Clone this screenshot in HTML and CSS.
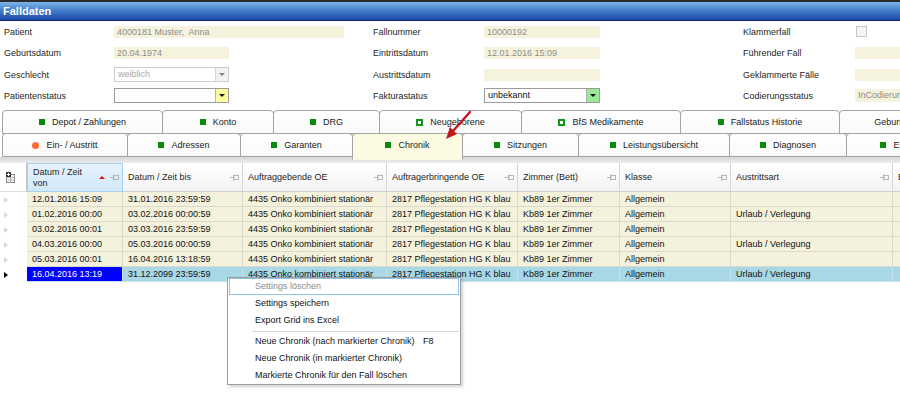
FILE: index.html
```html
<!DOCTYPE html>
<html lang="de">
<head>
<meta charset="UTF-8">
<title>Falldaten</title>
<link rel="stylesheet" href="styles.css">
</head>
<body>

<svg class="defs">
    <symbol id="pin" viewBox="0 0 9 7">
        <path d="M0 3.5h3M3.5 0.5v6" stroke="#b8b8b8" stroke-width="1"/>
        <rect x="4" y="1.5" width="4.5" height="4" fill="none" stroke="#b8b8b8" stroke-width="1"/>
    </symbol>
</svg>

<div class="titlebar">Falldaten</div>

<div class="form">
    <span class="lbl">Patient</span>
    <div><div class="f wide">4000181 Muster,&nbsp; Anna</div></div>
    <span class="lbl">Fallnummer</span>
    <div><div class="f c2">10000192</div></div>
    <span class="lbl">Klammerfall</span>
    <div><div class="check"></div></div>

    <span class="lbl">Geburtsdatum</span>
    <div><div class="f">20.04.1974</div></div>
    <span class="lbl">Eintrittsdatum</span>
    <div><div class="f c2">12.01.2016 15:09</div></div>
    <span class="lbl">Führender Fall</span>
    <div><div class="f c3"></div></div>

    <span class="lbl">Geschlecht</span>
    <div><div class="combo ro"><span class="val">weiblich</span><span class="btn"></span></div></div>
    <span class="lbl">Austrittsdatum</span>
    <div><div class="f c2"></div></div>
    <span class="lbl">Geklammerte Fälle</span>
    <div><div class="f c3"></div></div>

    <span class="lbl">Patientenstatus</span>
    <div><div class="combo"><span class="val"></span><span class="btn yellow"></span></div></div>
    <span class="lbl">Fakturastatus</span>
    <div><div class="combo c2"><span class="val">unbekannt</span><span class="btn green"></span></div></div>
    <span class="lbl">Codierungsstatus</span>
    <div><div class="f c3 tall">InCodierung</div></div>
</div>

<div class="tabs">
    <div class="tabrow">
        <div class="tab t-depot"><i class="sq"></i>Depot / Zahlungen</div>
        <div class="tab t-konto"><i class="sq"></i>Konto</div>
        <div class="tab t-drg"><i class="sq"></i>DRG</div>
        <div class="tab t-neu"><i class="sq empty"></i>Neugeborene</div>
        <div class="tab t-bfs"><i class="sq empty"></i>BfS Medikamente</div>
        <div class="tab t-hist"><i class="sq"></i>Fallstatus Historie</div>
        <div class="tab t-geb">Geburtsinfo</div>
    </div>
    <div class="tabrow">
        <div class="tab t-ein"><i class="dot"></i>Ein- / Austritt</div>
        <div class="tab t-adr"><i class="sq"></i>Adressen</div>
        <div class="tab t-gar"><i class="sq"></i>Garanten</div>
        <div class="tab t-chr active"><i class="sq"></i>Chronik</div>
        <div class="tab t-sitz"><i class="sq"></i>Sitzungen</div>
        <div class="tab t-leist"><i class="sq"></i>Leistungsübersicht</div>
        <div class="tab t-diag"><i class="sq"></i>Diagnosen</div>
        <div class="tab t-einw"><i class="sq"></i>Einweisung</div>
    </div>
</div>
<div class="strip"></div>

<div class="grid">
    <div class="gh">
        <div class="hc sel">
            <svg width="10" height="11" viewBox="0 0 10 11">
                <rect x="0.5" y="2.5" width="8" height="8" fill="#fff" stroke="#8a8a8a"/>
                <path d="M0.5 5.5h8M0.5 8h8M4.5 2.5v8" stroke="#b0b0b0"/>
                <rect x="0" y="0" width="5" height="5" fill="#3a3a3a"/>
                <path d="M2.5 1v3M1 2.5h3" stroke="#fff"/>
            </svg>
        </div>
        <div class="hc on"><span class="t">Datum / Zeit<br>von</span><i class="sort"></i><svg class="pin"><use href="#pin"/></svg></div>
        <div class="hc"><span class="t">Datum / Zeit bis</span><svg class="pin"><use href="#pin"/></svg></div>
        <div class="hc"><span class="t">Auftraggebende OE</span><svg class="pin"><use href="#pin"/></svg></div>
        <div class="hc"><span class="t">Auftragerbringende OE</span><svg class="pin"><use href="#pin"/></svg></div>
        <div class="hc"><span class="t">Zimmer (Bett)</span><svg class="pin"><use href="#pin"/></svg></div>
        <div class="hc"><span class="t">Klasse</span><svg class="pin"><use href="#pin"/></svg></div>
        <div class="hc"><span class="t">Austrittsart</span><svg class="pin"><use href="#pin"/></svg></div>
        <div class="hc"><span class="t">Bemerkung</span><svg class="pin"><use href="#pin"/></svg></div>
    </div>

    <div class="gr">
        <div class="c s"></div><div class="c">12.01.2016 15:09</div><div class="c">31.01.2016 23:59:59</div>
        <div class="c">4435 Onko kombiniert stationär</div><div class="c">2817 Pflegestation HG K blau</div>
        <div class="c">Kb89 1er Zimmer</div><div class="c">Allgemein</div><div class="c"></div><div class="c"></div>
    </div>
    <div class="gr">
        <div class="c s"></div><div class="c">01.02.2016 00:00</div><div class="c">03.02.2016 00:00:59</div>
        <div class="c">4435 Onko kombiniert stationär</div><div class="c">2817 Pflegestation HG K blau</div>
        <div class="c">Kb89 1er Zimmer</div><div class="c">Allgemein</div><div class="c">Urlaub / Verlegung</div><div class="c"></div>
    </div>
    <div class="gr">
        <div class="c s"></div><div class="c">03.02.2016 00:01</div><div class="c">03.03.2016 23:59:59</div>
        <div class="c">4435 Onko kombiniert stationär</div><div class="c">2817 Pflegestation HG K blau</div>
        <div class="c">Kb89 1er Zimmer</div><div class="c">Allgemein</div><div class="c"></div><div class="c"></div>
    </div>
    <div class="gr">
        <div class="c s"></div><div class="c">04.03.2016 00:00</div><div class="c">05.03.2016 00:00:59</div>
        <div class="c">4435 Onko kombiniert stationär</div><div class="c">2817 Pflegestation HG K blau</div>
        <div class="c">Kb89 1er Zimmer</div><div class="c">Allgemein</div><div class="c">Urlaub / Verlegung</div><div class="c"></div>
    </div>
    <div class="gr">
        <div class="c s"></div><div class="c">05.03.2016 00:01</div><div class="c">16.04.2016 13:18:59</div>
        <div class="c">4435 Onko kombiniert stationär</div><div class="c">2817 Pflegestation HG K blau</div>
        <div class="c">Kb89 1er Zimmer</div><div class="c">Allgemein</div><div class="c"></div><div class="c"></div>
    </div>
    <div class="gr cur">
        <div class="c s"></div><div class="c hi">16.04.2016 13:19</div><div class="c">31.12.2099 23:59:59</div>
        <div class="c">4435 Onko kombiniert stationär</div><div class="c">2817 Pflegestation HG K blau</div>
        <div class="c">Kb89 1er Zimmer</div><div class="c">Allgemein</div><div class="c">Urlaub / Verlegung</div><div class="c"></div>
    </div>
</div>

<div class="menu">
    <div class="mi hover disabled">Settings löschen</div>
    <div class="mi">Settings speichern</div>
    <div class="mi">Export Grid ins Excel</div>
    <div class="sep"></div>
    <div class="mi"><span class="ml">Neue Chronik (nach markierter Chronik)</span>F8</div>
    <div class="mi">Neue Chronik (in markierter Chronik)</div>
    <div class="mi">Markierte Chronik für den Fall löschen</div>
</div>

<svg class="arrow" width="50" height="40" viewBox="0 0 50 40">
    <path d="M40 7L23 26" stroke="#c4161c" stroke-width="2.4" stroke-linecap="round"/>
    <polygon points="16,34 27,29 20,22" fill="#c4161c"/>
</svg>

</body>
</html>
```

FILE: styles.css
```css
body {
    margin: 0;
    width: 900px;
    height: 393px;
    overflow: hidden;
    position: relative;
    background-color: #fff;
    font-family: "Liberation Sans", Arial, sans-serif;
    font-size: 9px;
    color: #1c1c1c;
}

.defs {
    display: none;
}

.titlebar {
    height: 18px;
    border-top: 2px solid #2c2c2c;
    border-bottom: 1px solid #0c2270;
    background: linear-gradient(#7cb6e8, #4480cc 45%, #1d4aa4);
    color: #fff;
    font-size: 11px;
    font-weight: bold;
    line-height: 18px;
    padding-left: 3px;
}

/* Falldaten form */
.form {
    display: grid;
    grid-template-columns: 110px 259px 111px 259px 112px 1fr;
    grid-template-rows: 21px 22px 21px 21px;
    align-items: center;
    padding-left: 4px;
}

.lbl {
    color: #1e1e1e;
}

.f {
    box-sizing: border-box;
    width: 115px;
    height: 12px;
    line-height: 12px;
    padding-left: 3px;
    background-color: #f5f3dd;
    color: #8c8c8c;
    white-space: nowrap;
    overflow: hidden;
}

.f.wide {
    width: 230px;
}

.f.c2,
.combo.c2 {
    width: 116px;
}

.f.c3 {
    width: 80px;
}

.f.tall {
    height: 13px;
    line-height: 13px;
}

.check {
    box-sizing: border-box;
    width: 11px;
    height: 11px;
    margin-left: 1px;
    border: 1px solid #c6c6c6;
    background-color: #f5f5ef;
}

.combo {
    box-sizing: border-box;
    display: flex;
    width: 115px;
    height: 15px;
    border: 1px solid #9c9c9c;
    background-color: #fff;
}

.combo .val {
    flex: 1;
    padding-left: 3px;
    line-height: 13px;
    color: #111;
}

.combo .btn {
    width: 12px;
    border-left: 1px solid #b4b4b4;
    background-color: #f2f2f2;
    display: flex;
    justify-content: center;
    align-items: center;
}

.combo .btn::after {
    content: "";
    border-left: 3px solid transparent;
    border-right: 3px solid transparent;
    border-top: 3px solid #111;
}

.combo.ro {
    border-color: #cdcdcd;
}

.combo.ro .val {
    color: #a9a9a9;
}

.combo.ro .btn {
    border-left-color: #d6d6d6;
}

.combo.ro .btn::after {
    border-top-color: #808080;
}

.combo .btn.yellow {
    background-color: #ffff9e;
}

.combo .btn.green {
    background-color: #98e898;
}

/* tabs */
.tabs {
    margin-top: 4px;
    padding-left: 2px;
}

.tabrow {
    display: flex;
    height: 24px;
}

.tabrow + .tabrow {
    margin-top: -1px;
}

.tab {
    flex: none;
    box-sizing: border-box;
    height: 24px;
    margin-right: -1px;
    border: 1px solid #a4a4a4;
    border-radius: 4px 4px 0 0;
    background: linear-gradient(#fff, #f9f9f9);
    display: flex;
    justify-content: center;
    align-items: center;
    gap: 7px;
    color: #222;
    white-space: nowrap;
}

.tab.active {
    height: 27px;
    padding-bottom: 3px;
    background: #fcfae0;
    border-bottom-color: #fcfae0;
}

.sq {
    box-sizing: border-box;
    width: 6px;
    height: 6px;
    background-color: #0a8a0a;
}

.sq.empty {
    width: 7px;
    height: 7px;
    background-color: #fff;
    border: 2px solid #12961a;
}

.dot {
    width: 7px;
    height: 7px;
    border-radius: 50%;
    background-color: #ff6a33;
}

.t-depot { width: 161px; }
.t-konto { width: 112px; }
.t-drg { width: 107px; }
.t-neu { width: 143px; }
.t-bfs { width: 160px; }
.t-hist { width: 160px; }
.t-geb { width: 117px; }

.t-ein { width: 126px; }
.t-adr { width: 114px; }
.t-gar { width: 113px; }
.t-chr { width: 111px; }
.t-sitz { width: 117px; }
.t-leist { width: 152px; }
.t-diag { width: 118px; }
.t-einw { width: 128px; }

.strip {
    height: 6px;
    background: linear-gradient(#d6d6d6, #ebebeb);
}

/* grid */
.gh,
.gr {
    display: grid;
    grid-template-columns: 27px 96px 120px 144px 131px 102px 111px 162px 40px;
    width: 933px;
}

.gh {
    height: 29px;
}

.hc {
    box-sizing: border-box;
    display: flex;
    align-items: center;
    padding: 0 3px 0 5px;
    border-right: 1px solid #d6d6d6;
    border-bottom: 1px solid #d0d0d0;
    background: linear-gradient(#fff, #f3f3f3);
    color: #1e1e1e;
    white-space: nowrap;
    overflow: hidden;
}

.hc .t {
    flex: 1;
    line-height: 11px;
}

.hc.on {
    padding-left: 5px;
    border: 1px solid #a8d1ef;
    background: linear-gradient(#e6f3fc, #d2e8f8);
}

.hc.sel {
    padding-left: 6px;
    background: #fff;
    border-right-color: #c4c4c4;
    border-bottom-color: #e0e0e0;
}

.sort {
    width: 0;
    height: 0;
    margin-right: 5px;
    border-left: 3px solid transparent;
    border-right: 3px solid transparent;
    border-bottom: 3px solid #e31010;
}

.pin {
    width: 9px;
    height: 7px;
    flex: none;
}

.c {
    box-sizing: border-box;
    height: 15px;
    line-height: 14px;
    padding-left: 5px;
    border-right: 1px solid #dad9cc;
    border-bottom: 1px solid #dad9cc;
    background-color: #f4f2dc;
    color: #111;
    white-space: nowrap;
    overflow: hidden;
}

.c.s {
    background-color: #fff;
    border: none;
    padding-left: 4px;
    display: flex;
    align-items: center;
}

.c.s::before {
    content: "";
    border-left: 4px solid #d8d8d8;
    border-top: 3px solid transparent;
    border-bottom: 3px solid transparent;
}

.gr.cur .c {
    background-color: #a8d8e6;
    border-color: #c4e3ec;
}

.gr.cur .c.s {
    background-color: #fff;
}

.gr.cur .c.s::before {
    border-left-color: #000;
}

.gr.cur .c.hi {
    background-color: #0000ff;
    color: #fff;
}

/* context menu */
.menu {
    position: absolute;
    left: 227px;
    top: 277px;
    width: 234px;
    box-sizing: border-box;
    border: 1px solid #9c9c9c;
    background-color: #fff;
    box-shadow: 2px 2px 3px rgba(0, 0, 0, 0.18);
    z-index: 2;
}

.mi {
    box-sizing: border-box;
    display: flex;
    height: 17px;
    line-height: 15px;
    margin: 0 1px;
    padding-left: 25px;
    border: 1px solid transparent;
    color: #111;
    white-space: nowrap;
}

.mi.hover {
    border-color: #8fc3ef;
}

.mi.disabled {
    color: #8c8c8c;
}

.ml {
    width: 168px;
}

.sep {
    height: 1px;
    margin: 2px 1px 1px 24px;
    background-color: #d6d6d6;
}

.arrow {
    position: absolute;
    left: 430px;
    top: 105px;
    z-index: 3;
}
```
